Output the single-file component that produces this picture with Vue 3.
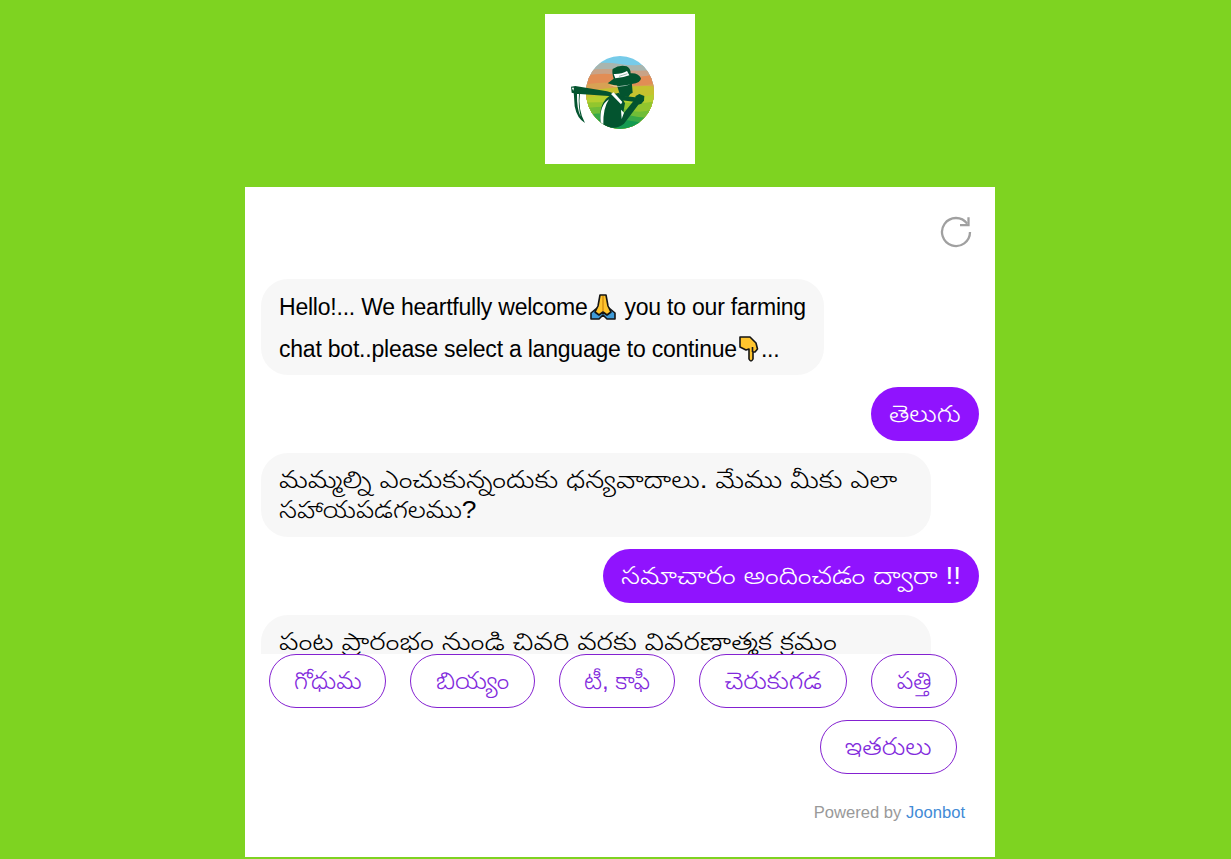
<script setup>
const choices = [
  { label: 'గోధుమ', size: 'w117' },
  { label: 'బియ్యం', size: 'w125' },
  { label: 'టీ, కాఫీ', size: 'w116' },
  { label: 'చెరుకుగడ', size: 'w148' },
  { label: 'పత్తి', size: 'w86' },
  { label: 'ఇతరులు', size: 'w137' },
]
</script>

<template>
  <div class="page">
    <div class="logo">
      <svg width="150" height="150" viewBox="0 0 450 450">
        <defs>
          <clipPath id="disc"><ellipse cx="225" cy="235" rx="102" ry="109" /></clipPath>
        </defs>
        <g clip-path="url(#disc)">
          <rect x="120" y="120" width="210" height="230" fill="#76cbe9" />
          <path d="M120 150Q180 142 225 150T330 148V350H120Z" fill="#a9b5ae" />
          <path d="M120 169Q180 162 235 168T330 165V350H120Z" fill="#c9a386" />
          <path d="M120 184Q180 174 235 184T330 180V350H120Z" fill="#e28d55" />
          <path d="M120 211Q190 200 240 210T330 208V350H120Z" fill="#d8a154" />
          <path d="M120 232Q180 222 240 218T330 217V350H120Z" fill="#c5c22f" />
          <path d="M120 252Q180 240 235 247T330 240V350H120Z" fill="#b5cf2f" />
          <path d="M120 266Q210 262 250 266T330 262V350H120Z" fill="#92c62e" />
          <path d="M120 282Q210 272 250 287T330 281V350H120Z" fill="#70bd37" />
          <path d="M120 302Q210 292 260 305T330 300V350H120Z" fill="#38aa48" />
          <path d="M120 322Q210 310 260 321T330 316V350H120Z" fill="#149a51" />
        </g>
        <path fill="#03542f" d="M166 324C163 285 172 255 200 242L222 236 240 268 234 300 268 258 272 246 283 240 298 246 297 260 289 269 280 272 237 329Q203 356 166 324Z" />
        <path fill="#03542f" d="M78 218L91 216 186 232 203 237 231 245 270 250 272 264 231 259 191 246 93 239 80 236Z" />
        <path fill="#03542f" d="M86 233L105 237Q98 288 120 327Q96 314 89 277Z" />
        <path d="M96 240Q95 284 107 308Q99 276 102 240Z" fill="#fff" />
        <path d="M80 221L87 221 85 230Z" fill="#fff" />
        <path d="M198 240L206 235 232 264 228 271Z" fill="#fff" />
        <path d="M167 325Q162 274 192 256Q174 282 175 331ZM228 287L237 296 230 315Z" fill="#fff" />
        <path fill="#03542f" d="M214 208L260 202 263 236 256 240 250 249 226 247Z" />
        <path fill="#03542f" d="M188 208Q199 199 206 194Q200 174 203 165Q224 151 245 157Q257 163 257 178Q279 176 288 193Q288 207 260 210Q219 221 188 208Z" />
        <path fill="#fff" d="M206 180Q230 181 246 171L253 184Q232 192 211 193ZM190 212Q226 220 257 211Q225 224 190 212Z" />
        <path d="M222 187L247 179" stroke="#03542f" stroke-width="1.2" fill="none" />
      </svg>
    </div>

    <main class="chat">
      <svg class="refresh" width="32" height="32" viewBox="0 0 32 32" fill="none" stroke="#a0a0a0" stroke-width="2.3">
        <path d="M30 16A14 14 0 1 1 27.2 7.6" />
        <path d="M28.5 1.2V9.2H20" />
      </svg>

      <section class="messages">
        <div class="bubble bot hello">
          <div class="line">
            <span>Hello!... We heartfully welcome</span>
            <svg class="pray" width="28" height="28" viewBox="0 0 28 28" stroke="#151515" stroke-width="1.6" stroke-linejoin="round">
              <path d="M2 20L8 15 14 20 20 15 26 20V26H18L14 22 10 26H2Z" fill="#3f9bd8" />
              <path d="M11 2H17L19 13 22 19 18 22 14 19 10 22 6 19 9 13Z" fill="#ffc52e" />
              <path d="M14 3V18" stroke="#d99414" />
            </svg>
            <span>you to our farming</span>
          </div>
          <div class="line">
            <span>chat bot..please select a language to continue</span>
            <svg class="point" width="22" height="28" viewBox="0 0 22 28" stroke="#151515" stroke-width="1.6" stroke-linejoin="round">
              <path d="M2 2H12L18 8 19.5 14 17 17H15V24Q13 28 11 24V14L8 15 2 12Z" fill="#ffc52e" />
              <path d="M14.5 12V17" />
            </svg>
            <span class="dots">...</span>
          </div>
        </div>

        <div class="bubble user u1"><span>తెలుగు</span></div>
        <div class="bubble bot telugu">
          <span class="t1">మమ్మల్ని ఎంచుకున్నందుకు ధన్యవాదాలు. మేము మీకు ఎలా</span>
          <span class="t2">సహాయపడగలము?</span>
        </div>
        <div class="bubble user u2"><span>సమాచారం అందించడం ద్వారా !!</span></div>
        <div class="bubble bot telugu last">
          <span class="t3">పంట ప్రారంభం నుండి చివరి వరకు వివరణాత్మక క్రమం</span>
        </div>
      </section>

      <section class="choices">
        <button v-for="c in choices" :key="c.label" :class="c.size"><span>{{ c.label }}</span></button>
      </section>

      <footer>Powered by <a>Joonbot</a></footer>
    </main>
  </div>
</template>

<style>
body { margin: 0; background: #7ed321; overflow: hidden; }
</style>

<style scoped>
* { box-sizing: border-box; }
.page {
  height: 859px;
  padding: 14px 0 0 245px;
  background: #7ed321;
  font-family: "Liberation Sans", "Noto Sans Telugu", sans-serif;
}
.logo { width: 150px; height: 150px; margin-left: 300px; background: #fff; }
.logo svg { display: block; }
.chat {
  display: flex;
  flex-direction: column;
  width: 750px;
  height: 670px;
  margin-top: 23px;
  padding: 29px 16px 0;
  background: #fff;
}
.refresh { align-self: flex-end; flex: none; margin-right: 7px; }
.messages {
  display: flex;
  flex-direction: column;
  align-items: flex-start;
  gap: 12px;
  flex: none;
  height: 375px;
  margin-top: 31px;
  overflow: hidden;
}
.bubble { flex: none; border-radius: 27px; font-size: 24px; font-weight: 300; white-space: nowrap; }
.bot { background: #f7f7f7; color: #000; padding: 0 18px; }
.hello { width: 563px; height: 96px; padding-top: 7px; font-size: 23px; font-weight: 400; letter-spacing: -0.22px; }
.line { display: flex; align-items: center; height: 42px; white-space: pre; }
.line svg { flex: none; }
.pray { margin: 0 8px 0 1px; }
.point { margin-left: 1px; }
.dots { margin-left: 1px; }
.user {
  display: flex;
  align-items: center;
  justify-content: center;
  align-self: flex-end;
  height: 54px;
  padding-top: 5px;
  background: #9013fe;
  color: #fff;
}
.u1 { width: 108px; }
.u1 span { transform: scaleX(1.125); }
.u2 { width: 376px; }
.u2 span { transform: scaleX(1.164); }
.telugu { width: 670px; height: 84px; padding-top: 12px; line-height: 30px; }
.telugu span { display: block; width: max-content; transform-origin: left; }
.t1 { transform: scaleX(1.167); }
.t2 { transform: scaleX(1.1); }
.t3 { transform: scaleX(1.18); }
.choices {
  display: flex;
  flex-wrap: wrap;
  justify-content: flex-end;
  gap: 12px 24px;
  margin-right: 22px;
}
.choices button {
  display: flex;
  align-items: center;
  justify-content: center;
  height: 54px;
  padding: 6px 0 0;
  border: 1px solid #8421d1;
  border-radius: 27px;
  background: #fff;
  color: #8129dc;
  font: 300 24px "Liberation Sans", "Noto Sans Telugu", sans-serif;
  white-space: nowrap;
}
.w117 { width: 117px; }
.w117 span { transform: scaleX(1.03); }
.w125 { width: 125px; }
.w125 span { transform: scaleX(1.06); }
.w116 { width: 116px; }
.w148 { width: 148px; }
.w148 span { transform: scaleX(1.08); }
.w86 { width: 86px; }
.w137 { width: 137px; }
.w137 span { transform: scaleX(1.08); }
footer { margin: 29px 14px 0 0; text-align: right; font-size: 16.6px; line-height: 20px; color: #999; }
footer a { color: #428bd6; }
</style>
